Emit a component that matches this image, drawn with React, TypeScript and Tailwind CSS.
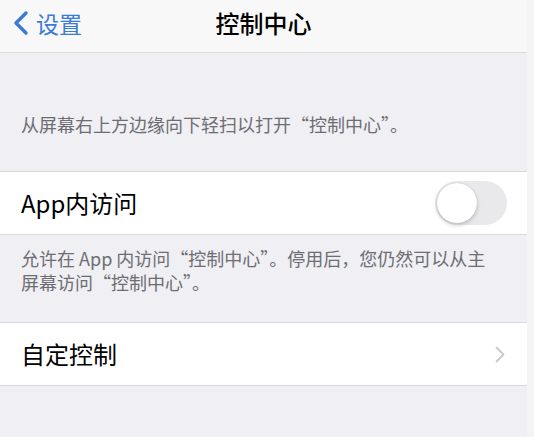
export default function App() {
  const font = { fontFamily: '"Noto Sans CJK SC", "Noto Sans", sans-serif' };
  return (
    <div className="w-[534px] h-[437px] overflow-hidden flex bg-[#f4f4f6]" style={font}>
      <div className="w-[527px] h-full bg-[#efeff4] flex flex-col">
        {/* nav bar */}
        <div className="h-[53px] shrink-0 bg-[#f8f8f8] border-b border-[#dcdce0] relative flex items-center pb-[6px]">
          <div className="flex items-center pl-[11px] text-[#3a7bd5]">
            <svg width="20" height="26" viewBox="0 0 20 26" fill="none">
              <path d="M15 3 L5 13 L15 23" stroke="#3a7bd5" strokeWidth="3.4" strokeLinecap="round" strokeLinejoin="round" />
            </svg>
            <span className="ml-[5px] text-[23px] leading-none">设置</span>
          </div>
          <div className="absolute inset-0 flex items-center justify-center pb-[6px] pointer-events-none">
            <span className="text-[24px] font-medium text-black leading-none">控制中心</span>
          </div>
        </div>

        <p className="pt-[59px] pb-[35px] pl-[21px] text-[18px] leading-[24px] text-[#6d6d72]">
          从屏幕右上方边缘向下轻扫以打开“控制中心”。
        </p>

        <div className="h-[64px] bg-white border-y border-[#d8d8dc] flex items-center justify-between pl-[21px] pr-[20px]">
          <span className="text-[24px] text-black">App内访问</span>
          <div className="w-[72px] h-[44px] rounded-full bg-[#e9e9eb] p-[2px] flex items-center">
            <div className="w-[40px] h-[40px] rounded-full bg-white shadow-[0_2px_4px_rgba(0,0,0,0.2),0_0_1px_rgba(0,0,0,0.2)]" />
          </div>
        </div>

        <p className="pt-[11px] pb-[28px] pl-[21px] text-[18px] leading-[24px] text-[#6d6d72]">
          允许在 App 内访问“控制中心”。停用后，您仍然可以从主
          <br />
          屏幕访问“控制中心”。
        </p>

        <div className="h-[64px] bg-white border-y border-[#d8d8dc] flex items-center justify-between pl-[21px] pr-[22px]">
          <span className="text-[24px] text-black">自定控制</span>
          <svg width="10" height="17" viewBox="0 0 10 17" fill="none">
            <path d="M1.5 1.5 L8.5 8.5 L1.5 15.5" stroke="#c8c8cc" strokeWidth="1.8" strokeLinecap="round" strokeLinejoin="round" />
          </svg>
        </div>
      </div>
    </div>
  );
}
